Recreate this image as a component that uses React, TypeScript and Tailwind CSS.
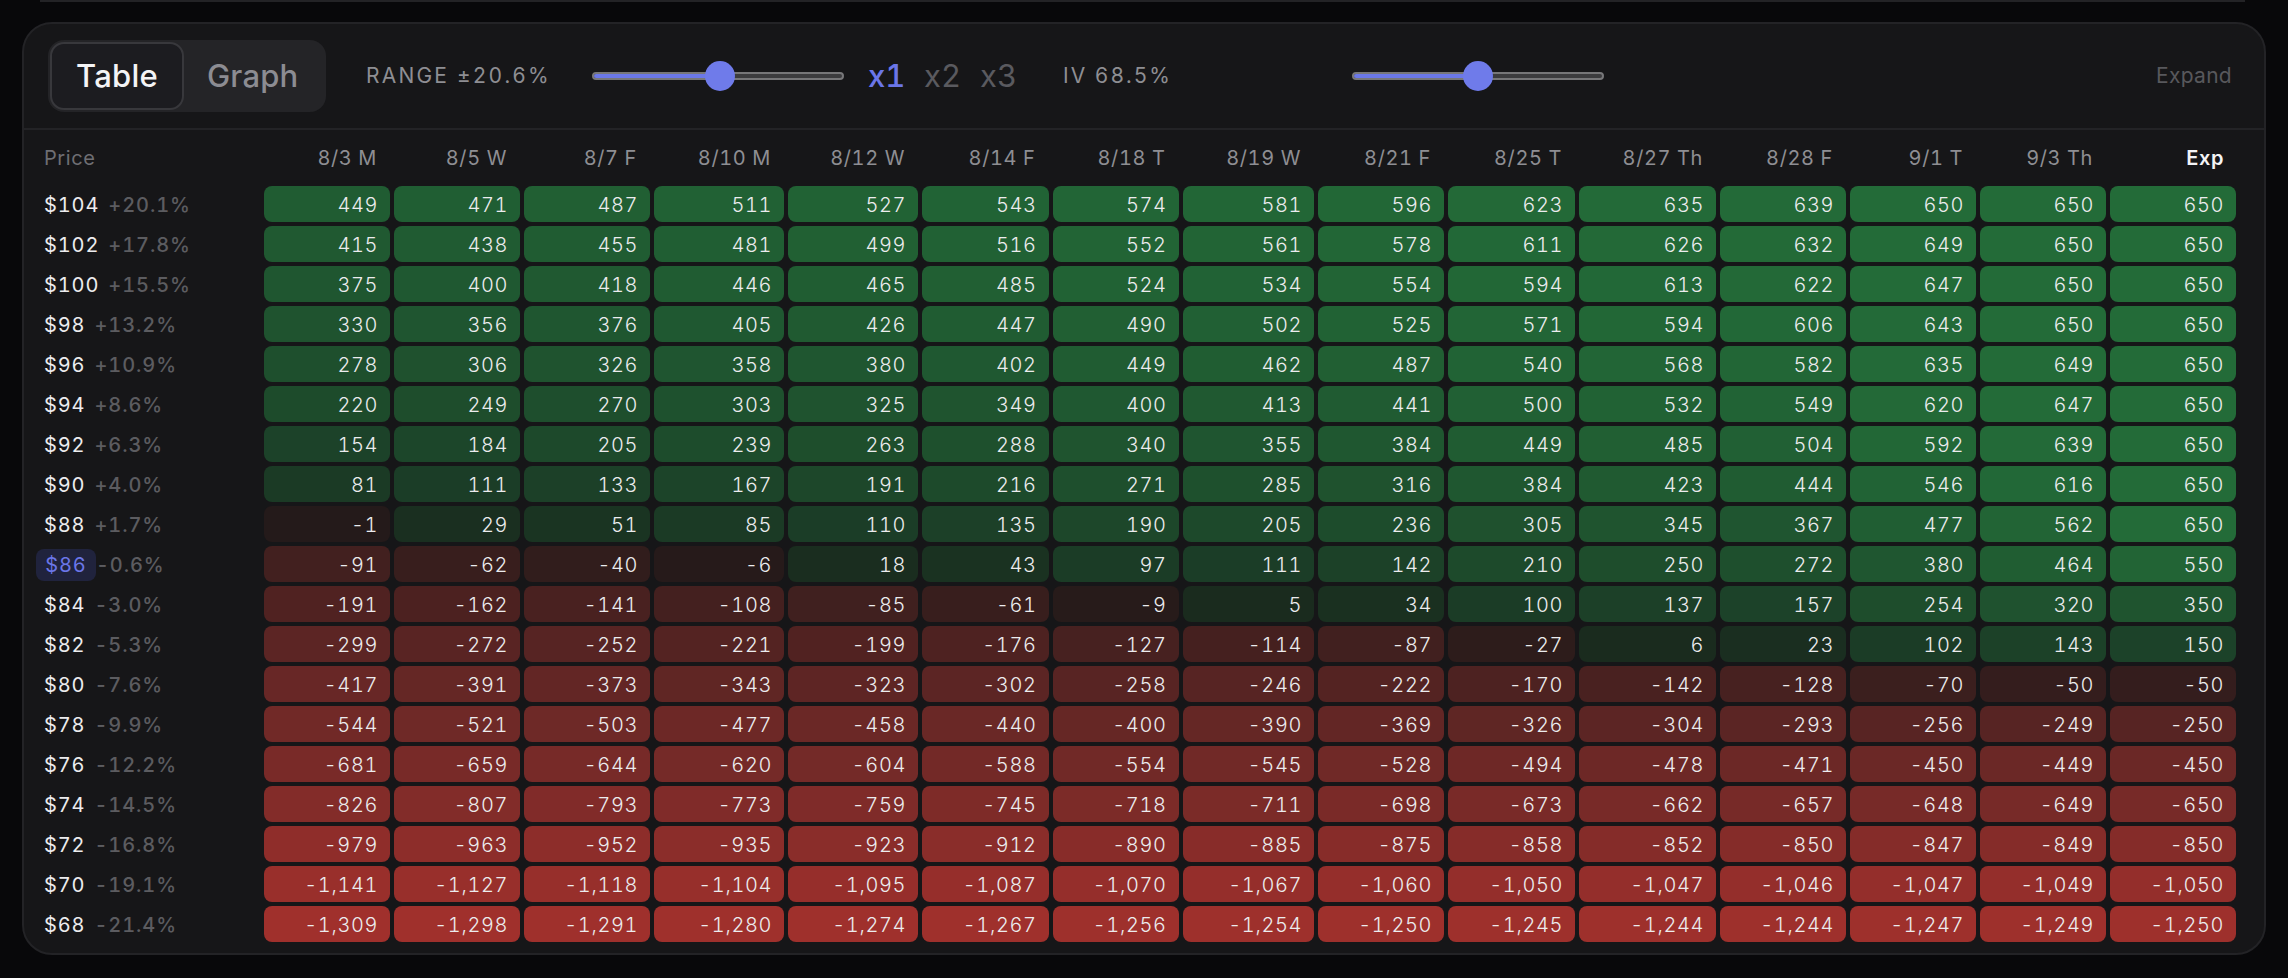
import React from "react";

const dates = ["8/3 M", "8/5 W", "8/7 F", "8/10 M", "8/12 W", "8/14 F", "8/18 T", "8/19 W", "8/21 F", "8/25 T", "8/27 Th", "8/28 F", "9/1 T", "9/3 Th"];

const rows: { price: number; pct: string; values: number[] }[] = [
  { price: 104, pct: "+20.1%", values: [449, 471, 487, 511, 527, 543, 574, 581, 596, 623, 635, 639, 650, 650, 650] },
  { price: 102, pct: "+17.8%", values: [415, 438, 455, 481, 499, 516, 552, 561, 578, 611, 626, 632, 649, 650, 650] },
  { price: 100, pct: "+15.5%", values: [375, 400, 418, 446, 465, 485, 524, 534, 554, 594, 613, 622, 647, 650, 650] },
  { price: 98, pct: "+13.2%", values: [330, 356, 376, 405, 426, 447, 490, 502, 525, 571, 594, 606, 643, 650, 650] },
  { price: 96, pct: "+10.9%", values: [278, 306, 326, 358, 380, 402, 449, 462, 487, 540, 568, 582, 635, 649, 650] },
  { price: 94, pct: "+8.6%", values: [220, 249, 270, 303, 325, 349, 400, 413, 441, 500, 532, 549, 620, 647, 650] },
  { price: 92, pct: "+6.3%", values: [154, 184, 205, 239, 263, 288, 340, 355, 384, 449, 485, 504, 592, 639, 650] },
  { price: 90, pct: "+4.0%", values: [81, 111, 133, 167, 191, 216, 271, 285, 316, 384, 423, 444, 546, 616, 650] },
  { price: 88, pct: "+1.7%", values: [-1, 29, 51, 85, 110, 135, 190, 205, 236, 305, 345, 367, 477, 562, 650] },
  { price: 86, pct: "-0.6%", values: [-91, -62, -40, -6, 18, 43, 97, 111, 142, 210, 250, 272, 380, 464, 550] },
  { price: 84, pct: "-3.0%", values: [-191, -162, -141, -108, -85, -61, -9, 5, 34, 100, 137, 157, 254, 320, 350] },
  { price: 82, pct: "-5.3%", values: [-299, -272, -252, -221, -199, -176, -127, -114, -87, -27, 6, 23, 102, 143, 150] },
  { price: 80, pct: "-7.6%", values: [-417, -391, -373, -343, -323, -302, -258, -246, -222, -170, -142, -128, -70, -50, -50] },
  { price: 78, pct: "-9.9%", values: [-544, -521, -503, -477, -458, -440, -400, -390, -369, -326, -304, -293, -256, -249, -250] },
  { price: 76, pct: "-12.2%", values: [-681, -659, -644, -620, -604, -588, -554, -545, -528, -494, -478, -471, -450, -449, -450] },
  { price: 74, pct: "-14.5%", values: [-826, -807, -793, -773, -759, -745, -718, -711, -698, -673, -662, -657, -648, -649, -650] },
  { price: 72, pct: "-16.8%", values: [-979, -963, -952, -935, -923, -912, -890, -885, -875, -858, -852, -850, -847, -849, -850] },
  { price: 70, pct: "-19.1%", values: [-1141, -1127, -1118, -1104, -1095, -1087, -1070, -1067, -1060, -1050, -1047, -1046, -1047, -1049, -1050] },
  { price: 68, pct: "-21.4%", values: [-1309, -1298, -1291, -1280, -1274, -1267, -1256, -1254, -1250, -1245, -1244, -1244, -1247, -1249, -1250] },
];

type Stop = [number, number, number, number];

const redStops: Stop[] = [
  [0, 36, 26, 26],
  [91, 66, 32, 31],
  [191, 80, 34, 33],
  [250, 87, 36, 35],
  [450, 107, 40, 38],
  [650, 119, 42, 40],
  [850, 133, 44, 41],
  [1050, 148, 46, 43],
  [1250, 158, 48, 44],
  [1309, 160, 48, 44],
];

const greenStops: Stop[] = [
  [0, 26, 42, 30],
  [29, 26, 47, 32],
  [81, 27, 58, 37],
  [154, 28, 66, 41],
  [220, 29, 75, 43],
  [278, 30, 79, 45],
  [330, 31, 83, 47],
  [375, 31, 86, 48],
  [449, 32, 92, 50],
  [650, 35, 107, 56],
];

// piecewise lerp, the colour ramp in the picture isn't linear
const cellColor = (value: number) => {
  const stops = value < 0 ? redStops : greenStops;
  const v = Math.abs(value);
  for (let i = 1; i < stops.length; i++) {
    const [x0, r0, g0, b0] = stops[i - 1];
    const [x1, r1, g1, b1] = stops[i];
    if (v <= x1) {
      const t = (v - x0) / (x1 - x0);
      return `rgb(${r0 + (r1 - r0) * t}, ${g0 + (g1 - g0) * t}, ${b0 + (b1 - b0) * t})`;
    }
  }
  const last = stops[stops.length - 1];
  return `rgb(${last[1]}, ${last[2]}, ${last[3]})`;
};

const Slider = ({ fill }: { fill: string }) => (
  <div className="relative h-2 w-[252px] rounded-full border-2 border-[#777779] bg-[#3c3c3e]">
    <div className={`h-full rounded-l-full bg-[#6b78e8] ${fill}`} />
    <div className={`absolute top-1/2 h-[30px] w-[30px] -translate-x-1/2 -translate-y-1/2 rounded-full bg-[#6f7bea] ${fill === "w-[128px]" ? "left-[126px]" : "left-[124px]"}`} />
  </div>
);

const App = () => {
  return (
    <div className="min-h-[978px] bg-[#08080a] font-['Inter',sans-serif] text-[20px] tracking-[0.6px] tabular-nums text-[#ececee]">
      <div className="ml-10 mr-[43px] h-0.5 bg-[#232326]" />

      <div className="mx-[22px] mt-5 rounded-[30px] border-2 border-[#232326] bg-[#161618]">
        {/* toolbar */}
        <div className="flex items-center border-b-2 border-[#232326] py-4 pl-[24px] pr-[32px]">
          <div className="flex h-[72px] w-[278px] items-center rounded-2xl bg-[#242427] p-0.5 text-[31px] font-medium tracking-[0.2px]">
            <div className="flex h-[68px] w-[134px] items-center justify-center rounded-[14px] border-2 border-[#38383c] bg-[#1c1c20] text-[#f4f4f6]">
              Table
            </div>
            <div className="ml-[23px] text-[#8c8c92]">Graph</div>
          </div>

          <div className="ml-10 w-[226px] text-[21px] tracking-[2.2px] text-[#8e8e93]">RANGE ±20.6%</div>
          <Slider fill="w-[128px]" />

          <div className="ml-6 flex gap-5 text-[31px] tracking-normal text-[#5a5a5f]">
            <span className="w-9 font-medium text-[#6b76e8]">x1</span>
            <span className="w-9">x2</span>
            <span className="w-9">x3</span>
          </div>

          <div className="ml-[47px] w-[289px] text-[21px] tracking-[2px] text-[#8e8e93]">IV 68.5%</div>
          <Slider fill="w-[124px]" />

          <div className="ml-auto text-[21px] tracking-[0.3px] text-[#58585c]">Expand</div>
        </div>

        {/* grid */}
        <div className="grid grid-cols-[224px_126px_126px_126px_130px_130px_126.5px_126px_131.5px_126px_127px_137px_126px_126px_126px_126px] gap-1 pb-[11px] pl-3 pr-[28px]">
          <div className="flex h-[52px] items-center pl-2 pt-1 text-[#6e6e73]">Price</div>
          {dates.map((d) => (
            <div key={d} className="flex h-[52px] items-center justify-end pr-[13px] pt-1 text-[#8e8e93]">
              {d}
            </div>
          ))}
          <div className="flex h-[52px] items-center justify-end pr-3 pt-1 font-semibold text-[#f4f4f6]">Exp</div>

          {rows.map((row) => (
            <React.Fragment key={row.price}>
              <div className="flex h-9 items-center whitespace-nowrap pt-px tracking-[0.9px]">
                {row.price === 86 ? (
                  <span className="flex h-8 w-[60px] items-center justify-center rounded-lg bg-[#20233d] text-[#6b76e8]">
                    ${row.price}
                  </span>
                ) : (
                  <span className="mr-[9px] pl-2">${row.price}</span>
                )}
                <span className="font-medium text-[#5c5c60]">{row.pct}</span>
              </div>
              {row.values.map((v, i) => (
                <div
                  key={i}
                  className="flex h-9 items-center justify-end rounded-lg pr-[12px] pt-px font-[350]"
                  style={{ backgroundColor: cellColor(v) }}
                >
                  {v.toLocaleString("en-US")}
                </div>
              ))}
            </React.Fragment>
          ))}
        </div>
      </div>
    </div>
  );
};

export default App;
